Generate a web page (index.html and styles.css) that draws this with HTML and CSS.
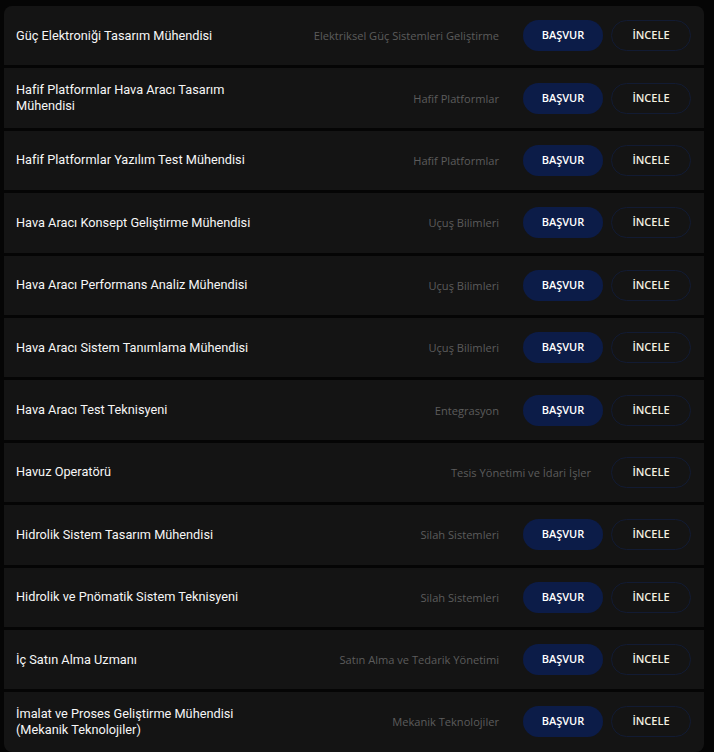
FILE: index.html
```html
<!DOCTYPE html>
<html lang="tr">
<head>
<meta charset="utf-8">
<link rel="stylesheet" href="styles.css">
</head>
<body>
<div class="list">
  <div class="row"><div class="title">Güç Elektroniği Tasarım Mühendisi</div><div class="cat">Elektriksel Güç Sistemleri Geliştirme</div><div class="btns"><a class="btn apply">BAŞVUR</a><a class="btn view">İNCELE</a></div></div>
  <div class="row"><div class="title">Hafif Platformlar Hava Aracı Tasarım Mühendisi</div><div class="cat">Hafif Platformlar</div><div class="btns"><a class="btn apply">BAŞVUR</a><a class="btn view">İNCELE</a></div></div>
  <div class="row"><div class="title">Hafif Platformlar Yazılım Test Mühendisi</div><div class="cat">Hafif Platformlar</div><div class="btns"><a class="btn apply">BAŞVUR</a><a class="btn view">İNCELE</a></div></div>
  <div class="row"><div class="title">Hava Aracı Konsept Geliştirme Mühendisi</div><div class="cat">Uçuş Bilimleri</div><div class="btns"><a class="btn apply">BAŞVUR</a><a class="btn view">İNCELE</a></div></div>
  <div class="row"><div class="title">Hava Aracı Performans Analiz Mühendisi</div><div class="cat">Uçuş Bilimleri</div><div class="btns"><a class="btn apply">BAŞVUR</a><a class="btn view">İNCELE</a></div></div>
  <div class="row"><div class="title">Hava Aracı Sistem Tanımlama Mühendisi</div><div class="cat">Uçuş Bilimleri</div><div class="btns"><a class="btn apply">BAŞVUR</a><a class="btn view">İNCELE</a></div></div>
  <div class="row"><div class="title">Hava Aracı Test Teknisyeni</div><div class="cat">Entegrasyon</div><div class="btns"><a class="btn apply">BAŞVUR</a><a class="btn view">İNCELE</a></div></div>
  <div class="row"><div class="title">Havuz Operatörü</div><div class="cat">Tesis Yönetimi ve İdari İşler</div><div class="btns"><a class="btn view">İNCELE</a></div></div>
  <div class="row"><div class="title">Hidrolik Sistem Tasarım Mühendisi</div><div class="cat">Silah Sistemleri</div><div class="btns"><a class="btn apply">BAŞVUR</a><a class="btn view">İNCELE</a></div></div>
  <div class="row"><div class="title">Hidrolik ve Pnömatik Sistem Teknisyeni</div><div class="cat">Silah Sistemleri</div><div class="btns"><a class="btn apply">BAŞVUR</a><a class="btn view">İNCELE</a></div></div>
  <div class="row"><div class="title">İç Satın Alma Uzmanı</div><div class="cat">Satın Alma ve Tedarik Yönetimi</div><div class="btns"><a class="btn apply">BAŞVUR</a><a class="btn view">İNCELE</a></div></div>
  <div class="row"><div class="title">İmalat ve Proses Geliştirme Mühendisi (Mekanik Teknolojiler)</div><div class="cat">Mekanik Teknolojiler</div><div class="btns"><a class="btn apply">BAŞVUR</a><a class="btn view">İNCELE</a></div></div>
</div>
</body>
</html>
```

FILE: styles.css
```css
html, body {
  margin: 0;
  padding: 0;
  background: #050505;
}
body {
  padding: 6px 10px 0 4px;
  font-family: Roboto, "Noto Sans", sans-serif;
}
.list {
  width: 700px;
  display: flex;
  flex-direction: column;
  gap: 3px;
  border-radius: 8px;
  overflow: hidden;
}
.row {
  height: 59.4px;
  background: #141414;
  display: flex;
  align-items: center;
  padding: 0 13px 0 12px;
  box-sizing: border-box;
}
.title {
  width: 250px;
  color: #f6f6f6;
  font-size: 12.75px;
  font-weight: 400;
  line-height: 16px;
}
.cat {
  flex: 1;
  text-align: right;
  font-family: "Open Sans", sans-serif;
  font-size: 11.1px;
  color: #5c5c5c;
  margin-right: 20px;
}
.btns {
  display: flex;
  gap: 8px;
}
.btn {
  display: flex;
  align-items: center;
  justify-content: center;
  width: 80px;
  height: 31px;
  padding-bottom: 2px;
  box-sizing: border-box;
  border-radius: 16px;
  font-family: "Open Sans", sans-serif;
  font-size: 11px;
  font-weight: 600;
  color: #ffffff;
}
.apply {
  background: #0c1c48;
  margin-left: 4px;
}
.view {
  border: 1px solid #121b33;
  color: #f2f0e0;
}
```
